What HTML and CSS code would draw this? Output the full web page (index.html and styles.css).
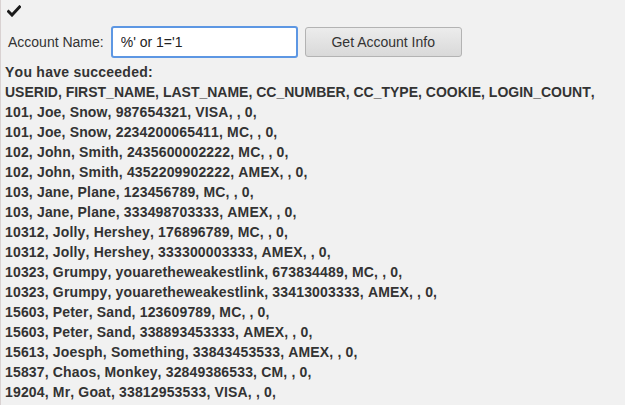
FILE: index.html
```html
<!DOCTYPE html>
<html>
<head>
<meta charset="utf-8">
<link rel="stylesheet" href="styles.css">
</head>
<body>
<div class="page">
  <div class="check">
    <svg width="14" height="12" viewBox="0 0 14 12"><path d="M1.5 6.5 L5 10 L12.5 2" fill="none" stroke="#1a1a1a" stroke-width="3" stroke-linecap="square"/></svg>
  </div>
  <form class="row">
    <label class="label">Account Name:</label>
    <input class="field" type="text" value="%' or 1='1">
    <button class="btn" type="button">Get Account Info</button>
  </form>
  <div class="output">
    <div class="title">You have succeeded:</div>
    <div class="head">USERID, FIRST_NAME, LAST_NAME, CC_NUMBER, CC_TYPE, COOKIE, LOGIN_COUNT, </div>
    <div class="rec">101, Joe, Snow, 987654321, VISA, , 0, </div>
    <div class="rec">101, Joe, Snow, 2234200065411, MC, , 0, </div>
    <div class="rec">102, John, Smith, 2435600002222, MC, , 0, </div>
    <div class="rec">102, John, Smith, 4352209902222, AMEX, , 0, </div>
    <div class="rec">103, Jane, Plane, 123456789, MC, , 0, </div>
    <div class="rec">103, Jane, Plane, 333498703333, AMEX, , 0, </div>
    <div class="rec">10312, Jolly, Hershey, 176896789, MC, , 0, </div>
    <div class="rec">10312, Jolly, Hershey, 333300003333, AMEX, , 0, </div>
    <div class="rec">10323, Grumpy, youaretheweakestlink, 673834489, MC, , 0, </div>
    <div class="rec">10323, Grumpy, youaretheweakestlink, 33413003333, AMEX, , 0, </div>
    <div class="rec">15603, Peter, Sand, 123609789, MC, , 0, </div>
    <div class="rec">15603, Peter, Sand, 338893453333, AMEX, , 0, </div>
    <div class="rec">15613, Joesph, Something, 33843453533, AMEX, , 0, </div>
    <div class="rec">15837, Chaos, Monkey, 32849386533, CM, , 0, </div>
    <div class="rec">19204, Mr, Goat, 33812953533, VISA, , 0, </div>
  </div>
</div>
</body>
</html>
```
FILE: styles.css
```css
html, body {
  margin: 0;
  padding: 0;
  background: #f1f1f1;
}
body {
  font-family: "Liberation Sans", Arial, sans-serif;
  font-size: 14px;
  color: #333;
  overflow: hidden;
  height: 405px;
  font-kerning: none;
}
.page {
  border-left: 1px solid #d9d2d2;
  height: 405px;
  padding-left: 4px;
}
.check {
  height: 20px;
  padding-left: 2px;
  padding-top: 5px;
  box-sizing: border-box;
}
.check svg { display: block; }
.row {
  display: flex;
  align-items: center;
  height: 36px;
  margin: 4px 0 0 0;
  padding-left: 3px;
}
.label {
  color: #333;
  margin-right: 7px;
}
.field {
  width: 187px;
  height: 32px;
  box-sizing: border-box;
  border: 2px solid #5d97e3;
  border-radius: 3px;
  background: #fff;
  padding: 0 8px;
  font-family: "Liberation Sans", Arial, sans-serif;
  font-size: 14px;
  color: #222;
  outline: none;
  margin: 0;
}
.btn {
  margin-left: 7px;
  width: 157px;
  height: 30px;
  box-sizing: border-box;
  border: 1px solid #b3b3b3;
  border-radius: 3px;
  background: linear-gradient(#ececec, #d9d9d9);
  font-family: "Liberation Sans", Arial, sans-serif;
  font-size: 14px;
  color: #333;
  padding: 0;
}
.output {
  font-weight: bold;
  line-height: 20px;
  margin-top: 2px;
  white-space: nowrap;
}
.title { letter-spacing: 0.25px; }
.head { letter-spacing: 0; }
.rec { letter-spacing: 0.16px; }
```
